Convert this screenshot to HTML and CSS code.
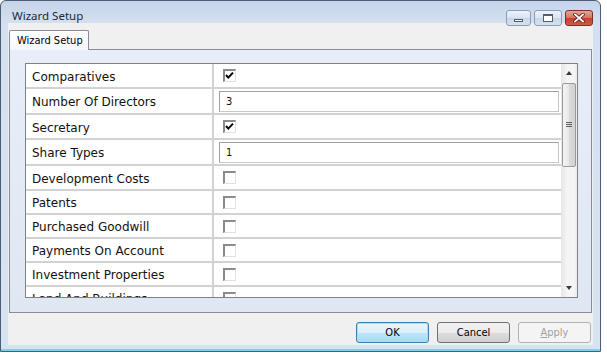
FILE: index.html
```html
<!DOCTYPE html>
<html>
<head>
<meta charset="utf-8">
<link rel="stylesheet" href="styles.css">
</head>
<body>
<div class="window">
  <div class="titlebar">
    <span class="title">Wizard Setup</span>
    <div class="caption-buttons">
      <span class="cbtn min"><i></i></span>
      <span class="cbtn max"><i></i></span>
      <span class="cbtn close">
        <svg width="12" height="10" viewBox="0 0 12 10"><path d="M2 1.5 L10 8.5 M10 1.5 L2 8.5" stroke="#5a1a14" stroke-width="3.4" stroke-linecap="square"/><path d="M2 1.5 L10 8.5 M10 1.5 L2 8.5" stroke="#ffffff" stroke-width="1.8" stroke-linecap="square"/></svg>
      </span>
    </div>
  </div>
  <div class="client">
    <div class="tabs"><div class="tab">Wizard Setup</div></div>
    <div class="panel">
      <div class="grid">
        <div class="rows">
          <div class="row h25"><div class="label">Comparatives</div><div class="value"><span class="check on"><svg width="11" height="11" viewBox="0 0 11 11"><path d="M2 5 L4.3 7.6 L9 2.6" fill="none" stroke="#000" stroke-width="2"/></svg></span></div></div>
          <div class="row h26"><div class="label">Number Of Directors</div><div class="value"><span class="input">3</span></div></div>
          <div class="row h25"><div class="label">Secretary</div><div class="value"><span class="check on"><svg width="11" height="11" viewBox="0 0 11 11"><path d="M2 5 L4.3 7.6 L9 2.6" fill="none" stroke="#000" stroke-width="2"/></svg></span></div></div>
          <div class="row h26"><div class="label">Share Types</div><div class="value"><span class="input">1</span></div></div>
          <div class="row h25"><div class="label">Development Costs</div><div class="value"><span class="check"></span></div></div>
          <div class="row h24"><div class="label">Patents</div><div class="value"><span class="check"></span></div></div>
          <div class="row h24"><div class="label">Purchased Goodwill</div><div class="value"><span class="check"></span></div></div>
          <div class="row h24"><div class="label">Payments On Account</div><div class="value"><span class="check"></span></div></div>
          <div class="row h24"><div class="label">Investment Properties</div><div class="value"><span class="check"></span></div></div>
          <div class="row h24"><div class="label">Land And Buildings</div><div class="value"><span class="check"></span></div></div>
        </div>
        <div class="scrollbar">
          <div class="arrow up"></div>
          <div class="track">
            <div class="thumb"><span class="grip"></span></div>
          </div>
          <div class="arrow down"></div>
        </div>
      </div>
    </div>
    <div class="buttons">
      <button class="btn default">OK</button>
      <button class="btn">Cancel</button>
      <button class="btn disabled"><u>A</u>pply</button>
    </div>
  </div>
</div>
</body>
</html>
```
FILE: styles.css
```css
html, body {
  margin: 0;
  padding: 0;
  background: #ffffff;
}

body {
  width: 607px;
  height: 357px;
  overflow: hidden;
}

.window {
  box-sizing: border-box;
  width: 601px;
  height: 352px;
  border: 1px solid #4c5d73;
  border-radius: 6px 6px 0 0;
  background: linear-gradient(to bottom, #c4d4ea 0px, #d4e0f0 22px, #d8e3f1 100%);
  padding: 0 7px 6px 7px;
  display: flex;
  flex-direction: column;
  box-shadow: inset 0 -2px 0 #7fd0e6;
}

.titlebar {
  height: 22px;
  flex: none;
  display: flex;
  align-items: flex-start;
  justify-content: space-between;
}

.title {
  font-family: "Noto Sans", "Open Sans", sans-serif;
  font-size: 11.5px;
  color: #1b2a3c;
  margin: 8px 0 0 4px;
  line-height: 14px;
}

.caption-buttons {
  display: flex;
  gap: 3px;
  margin-top: 9px;
  position: relative;
}

.cbtn {
  box-sizing: border-box;
  height: 16px;
  border: 1px solid #8b9db4;
  border-radius: 3px;
  background: linear-gradient(to bottom, #eef3fa 0%, #d9e3f0 50%, #c9d6e8 51%, #d6e1ef 100%);
  display: flex;
  align-items: center;
  justify-content: center;
}

.cbtn.min { width: 25px; }
.cbtn.max { width: 28px; }
.cbtn.close {
  width: 28px;
  border-color: #7b3127;
  background: linear-gradient(to bottom, #e7a396 0%, #d8705f 50%, #c2412f 51%, #d05a44 100%);
}

.cbtn.min i {
  display: block;
  width: 9px;
  height: 3px;
  margin-top: 5px;
  border: 1px solid #4f5f74;
  background: #ffffff;
  box-sizing: border-box;
}

.cbtn.max i {
  display: block;
  width: 10px;
  height: 8px;
  border: 1px solid #4f5f74;
  border-top-width: 2px;
  background: #ffffff;
  box-sizing: border-box;
}

.client {
  flex: 1;
  background: #f0f0f0;
  display: flex;
  flex-direction: column;
  padding: 7px 1px 0 1px;
}

.tabs {
  height: 19px;
  display: flex;
  position: relative;
}

.tab {
  box-sizing: border-box;
  width: 80px;
  height: 20px;
  border: 1px solid #898c95;
  border-bottom: none;
  border-radius: 2px 2px 0 0;
  background: linear-gradient(to bottom, #ffffff, #f4f7fb);
  font-family: "DejaVu Sans Condensed", "DejaVu Sans", sans-serif;
  font-size: 11px;
  color: #000;
  padding: 3px 0 0 7px;
  position: relative;
  z-index: 1;
}

.panel {
  box-sizing: border-box;
  height: 264px;
  border: 1px solid #898c95;
  background: linear-gradient(to bottom, #e8eef8 0%, #dfe7f3 100%);
  padding: 13px 13px 14px 15px;
}

.grid {
  box-sizing: border-box;
  height: 235px;
  border: 1px solid #7f8285;
  background: #ffffff;
  display: flex;
}

.rows {
  flex: 1;
  overflow: hidden;
}

.row {
  box-sizing: border-box;
  display: flex;
  border-bottom: 2px solid #d2d2d2;
  font-family: "DejaVu Sans", sans-serif;
  font-size: 12px;
  color: #111;
}

.row.h24 { height: 24px; }
.row.h25 { height: 25px; }
.row.h26 { height: 26px; }

.label {
  box-sizing: border-box;
  width: 188px;
  border-right: 2px solid #d2d2d2;
  padding: 2px 0 0 6px;
  display: flex;
  align-items: center;
  flex: none;
  white-space: nowrap;
}

.value {
  flex: 1;
  display: flex;
  align-items: center;
  padding-left: 5px;
  padding-right: 2px;
}

.check {
  box-sizing: border-box;
  width: 13px;
  height: 13px;
  margin-left: 4px;
  border-style: solid;
  border-width: 2px 1px 1px 2px;
  border-color: #8a8a8a #e2e2e2 #e2e2e2 #8a8a8a;
  background: #ffffff;
  display: flex;
  align-items: center;
  justify-content: center;
}

.check svg { display: block; margin: -1px 0 0 -1px; }

.input {
  box-sizing: border-box;
  flex: 1;
  height: 21px;
  border: 1px solid #a7a7a7;
  border-color: #a0a0a0 #c8c8c8 #c8c8c8 #a0a0a0;
  background: #ffffff;
  font-family: "DejaVu Sans Condensed", "DejaVu Sans", sans-serif;
  font-size: 11px;
  padding: 1px 0 0 6px;
  display: flex;
  align-items: center;
}

.scrollbar {
  width: 16px;
  flex: none;
  display: flex;
  flex-direction: column;
  background: linear-gradient(to right, #e6e6e6, #f5f5f5 40%, #f5f5f5 80%, #ececec);
}

.arrow {
  height: 18px;
  flex: none;
  display: flex;
  align-items: center;
  justify-content: center;
}

.arrow::before {
  content: "";
  width: 0;
  height: 0;
  border-left: 3px solid transparent;
  border-right: 3px solid transparent;
}

.arrow.up::before { border-bottom: 4px solid #3a3a3a; }
.arrow.down::before { border-top: 4px solid #3a3a3a; }

.track {
  flex: 1;
  padding: 1px 1px 0 1px;
}

.thumb {
  box-sizing: border-box;
  height: 84px;
  border: 1px solid #9a9a9a;
  border-radius: 2px;
  background: linear-gradient(to right, #f4f4f4, #e9e9e9 45%, #d9d9d9 55%, #d2d2d2);
  display: flex;
  align-items: center;
  justify-content: center;
}

.grip {
  width: 6px;
  height: 6px;
  background: repeating-linear-gradient(to bottom, #5d5d5d 0, #5d5d5d 1px, transparent 1px, transparent 2px);
}

.buttons {
  display: flex;
  justify-content: flex-end;
  gap: 8px;
  margin-top: 9px;
  padding-right: 1px;
}

.btn {
  box-sizing: border-box;
  width: 73px;
  height: 21px;
  margin: 0;
  border: 1px solid #707070;
  border-radius: 3px;
  background: linear-gradient(to bottom, #f2f2f2 0%, #ebebeb 50%, #dddddd 51%, #cfcfcf 100%);
  font-family: "DejaVu Sans Condensed", "DejaVu Sans", sans-serif;
  font-size: 11px;
  color: #000;
  padding: 0;
}

.btn u { text-decoration: underline; }

.btn.default {
  border-color: #3c7fb1;
  background: linear-gradient(to bottom, #eaf6fd 0%, #d9f0fc 50%, #bee6fd 51%, #a7d9f5 100%);
  box-shadow: inset 0 0 0 1px #9fe1f8;
}

.btn.disabled {
  border-color: #adb2b5;
  background: #f4f4f4;
  color: #a0a0a0;
}
```
